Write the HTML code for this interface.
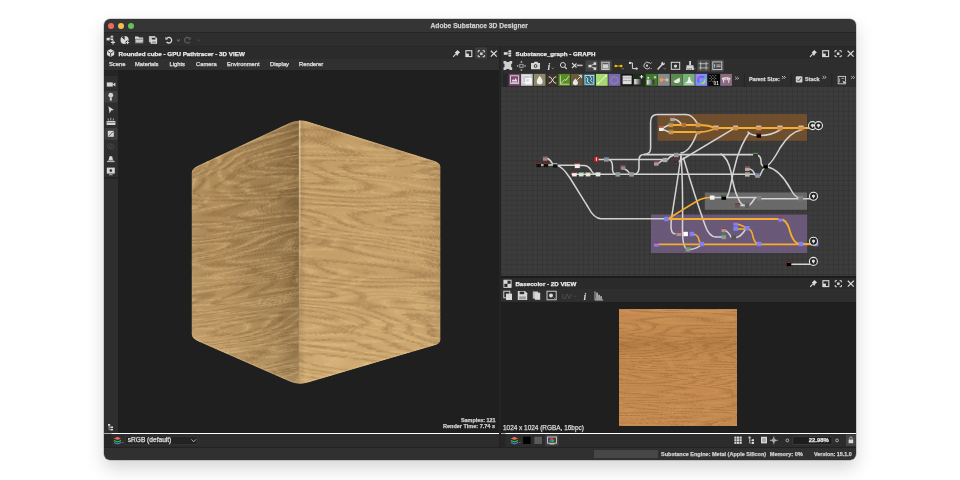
<!DOCTYPE html>
<html><head><meta charset="utf-8">
<style>
*{margin:0;padding:0;box-sizing:border-box}
html,body{width:960px;height:480px;overflow:hidden;background:#fff;font-family:"Liberation Sans",sans-serif;}
.a{position:absolute}
#win{position:absolute;left:104px;top:19px;width:752px;height:441px;border-radius:6px;overflow:hidden;box-shadow:0 8px 18px rgba(0,0,0,.17),0 0 0 .5px rgba(0,0,0,.3);will-change:transform}
#in{position:absolute;left:-104px;top:-19px;width:960px;height:480px}
.t{position:absolute;white-space:nowrap;color:#ececec;line-height:1;-webkit-text-stroke:0.25px currentColor}
.b{font-weight:bold}
.m{font-size:5.8px;top:62.3px;color:#e4e4e4}
</style></head><body>
<div id="win"><div id="in">
  <!-- title bar -->
  <div class="a" style="left:0;top:0;width:960px;height:33px;background:#353536"></div>
  <div class="a" style="left:0;top:32.4px;width:960px;height:1px;background:#262626"></div>
  <div class="a" style="left:108px;top:23px;width:6px;height:6px;border-radius:50%;background:#ed6a5e"></div>
  <div class="a" style="left:118px;top:23px;width:6px;height:6px;border-radius:50%;background:#f4bf4f"></div>
  <div class="a" style="left:128px;top:23px;width:6px;height:6px;border-radius:50%;background:#61c454"></div>
  <div class="t b" id="ttl" style="left:430.5px;top:22.5px;font-size:6.7px;color:#cfcfcf">Adobe Substance 3D Designer</div>
  <!-- toolbar -->
  <div class="a" style="left:0;top:33.4px;width:960px;height:13px;background:#2e2e2e"></div>
  <div class="a" style="left:0;top:46.2px;width:960px;height:1px;background:#272727"></div>
  <!-- left panel -->
  <div class="a" style="left:0;top:47px;width:499px;height:12px;background:#2b2b2b"></div>
  <div class="t b" id="h3d" style="left:118.4px;top:50.5px;font-size:6.25px">Rounded cube - GPU Pathtracer - 3D VIEW</div>
  <div class="a" style="left:0;top:59px;width:499px;height:11px;background:#303030"></div>
  <div class="t m" id="mn1" style="left:109px">Scene</div>
  <div class="t m" id="mn2" style="left:135px">Materials</div>
  <div class="t m" id="mn3" style="left:169.5px">Lights</div>
  <div class="t m" id="mn4" style="left:196px">Camera</div>
  <div class="t m" id="mn5" style="left:227px">Environment</div>
  <div class="t m" id="mn6" style="left:270px">Display</div>
  <div class="t m" id="mn7" style="left:299px">Renderer</div>
  <div class="a" style="left:0;top:70px;width:499px;height:363px;background:#1f1f1f"></div>
  <div class="a" style="left:0;top:70px;width:118px;height:363px;background:#2e2e2e"></div>
  <div class="a" style="left:0;top:70px;width:118px;height:6px;background:#252525"></div>
  <div class="a" style="left:0;top:433.5px;width:499px;height:13.5px;background:#2c2c2c"></div>
  <svg class="a" style="left:0;top:0" width="960" height="480" viewBox="0 0 960 480"><defs><clipPath id="cub"><path d="M191.80,172.48 Q191.80,168.48 198.80,165.20 L288.80,123.08 Q298.80,118.56 308.80,121.83 L433.30,160.42 Q440.30,162.59 440.30,166.59 L440.30,339.75 Q440.30,343.75 433.30,345.80 L308.80,382.28 Q298.80,385.50 288.80,381.37 L198.80,341.68 Q191.80,338.59 191.80,334.59 Z"/></clipPath><clipPath id="lf"><path d="M189.8,169.4136 L298.8,118.56479999999999 L298.8,385.49519999999995 L189.8,337.70980000000003 Z"/></clipPath><clipPath id="rf"><path d="M298.8,118.56479999999999 L442.3,163.213 L442.3,343.1661 L298.8,385.49519999999995 Z"/></clipPath><linearGradient id="gl" x1="0" y1="0" x2="0" y2="1"><stop offset="0" stop-color="#b28e5c"/><stop offset="0.45" stop-color="#b08c5b"/><stop offset="0.8" stop-color="#c09b66"/><stop offset="1" stop-color="#d2ae76"/></linearGradient><linearGradient id="gl3" x1="0" y1="0" x2="1" y2="0"><stop offset="0" stop-color="#fff4d8" stop-opacity="0.08"/><stop offset="0.3" stop-color="#000" stop-opacity="0"/><stop offset="0.8" stop-color="#2a1a08" stop-opacity="0.16"/><stop offset="1" stop-color="#2a1a08" stop-opacity="0.34"/></linearGradient><linearGradient id="gr" x1="0" y1="0" x2="0" y2="1"><stop offset="0" stop-color="#c29d67"/><stop offset="0.6" stop-color="#c6a06a"/><stop offset="1" stop-color="#d2ad74"/></linearGradient><linearGradient id="gr3" x1="0" y1="0" x2="1" y2="0"><stop offset="0" stop-color="#2a1a08" stop-opacity="0.18"/><stop offset="0.05" stop-color="#2a1a08" stop-opacity="0"/><stop offset="0.85" stop-color="#000" stop-opacity="0"/><stop offset="1" stop-color="#2a1a08" stop-opacity="0.08"/></linearGradient><linearGradient id="hl" x1="0" y1="0" x2="0" y2="1"><stop offset="0" stop-color="#fff2cc" stop-opacity="0.6"/><stop offset="0.4" stop-color="#fff2cc" stop-opacity="0.28"/><stop offset="0.75" stop-color="#fff2cc" stop-opacity="0.02"/><stop offset="1" stop-color="#fff2cc" stop-opacity="0"/></linearGradient><linearGradient id="bev" x1="0" y1="0" x2="1" y2="0"><stop offset="0" stop-color="#e8c890" stop-opacity="0"/><stop offset="0.5" stop-color="#e8c890" stop-opacity="0.22"/><stop offset="1" stop-color="#e8c890" stop-opacity="0"/></linearGradient><linearGradient id="bevm" x1="0" y1="0" x2="0" y2="1"><stop offset="0" stop-color="#fff" stop-opacity="0"/><stop offset="0.55" stop-color="#fff" stop-opacity="0"/><stop offset="1" stop-color="#fff" stop-opacity="1"/></linearGradient><mask id="bm"><rect x="280" y="110" width="40" height="280" fill="url(#bevm)"/></mask><filter id="wood" x="0" y="0" width="100%" height="100%" color-interpolation-filters="sRGB"><feTurbulence type="fractalNoise" baseFrequency="0.0022 0.016" numOctaves="3" seed="11" result="n"/><feComponentTransfer in="n" result="b"><feFuncR type="table" tableValues="0 0 0.1 0.7 0.25 0 0 0 0.1 0.7 0.25 0 0 0 0.1 0.7 0.25 0 0 0 0.1 0.7 0.25 0 0 0 0.1 0.7 0.25 0 0 0 0.1 0.7 0.25 0 0 0 0.1 0.7 0.25 0 0 0 0.1 0.7 0.25 0 0 0 0.1 0.7 0.25 0 0 0 0.1 0.7 0.25 0 0 0 0.1 0.7 0.25 0 0 0 0.1 0.7 0.25 0 0 0 0.1 0.7 0.25 0 0 0 0.1 0.7 0.25 0 0 0 0.1 0.7 0.25 0 0 0 0.1 0.7 0.25 0 0 0 0.1 0.7 0.25 0 0 0 0.1 0.7 0.25 0 0 0 0.1 0.7 0.25 0 0 0 0.1 0.7 0.25 0 0 0 0.1 0.7 0.25 0 0 0 0.1 0.7 0.25 0 0"/></feComponentTransfer><feColorMatrix in="b" type="matrix" values="0 0 0 0 0.36  0 0 0 0 0.23  0 0 0 0 0.1  0.4 0 0 0 0"/><feGaussianBlur stdDeviation="0.25"/></filter><filter id="wood2" x="0" y="0" width="100%" height="100%" color-interpolation-filters="sRGB"><feTurbulence type="fractalNoise" baseFrequency="0.0022 0.015" numOctaves="3" seed="23" result="n"/><feComponentTransfer in="n" result="b"><feFuncR type="table" tableValues="0 0 0.1 0.7 0.25 0 0 0 0.1 0.7 0.25 0 0 0 0.1 0.7 0.25 0 0 0 0.1 0.7 0.25 0 0 0 0.1 0.7 0.25 0 0 0 0.1 0.7 0.25 0 0 0 0.1 0.7 0.25 0 0 0 0.1 0.7 0.25 0 0 0 0.1 0.7 0.25 0 0 0 0.1 0.7 0.25 0 0 0 0.1 0.7 0.25 0 0 0 0.1 0.7 0.25 0 0 0 0.1 0.7 0.25 0 0 0 0.1 0.7 0.25 0 0 0 0.1 0.7 0.25 0 0 0 0.1 0.7 0.25 0 0 0 0.1 0.7 0.25 0 0 0 0.1 0.7 0.25 0 0 0 0.1 0.7 0.25 0 0 0 0.1 0.7 0.25 0 0 0 0.1 0.7 0.25 0 0 0 0.1 0.7 0.25 0 0"/></feComponentTransfer><feColorMatrix in="b" type="matrix" values="0 0 0 0 0.36  0 0 0 0 0.23  0 0 0 0 0.1  0.38 0 0 0 0"/><feGaussianBlur stdDeviation="0.25"/></filter><filter id="woodl" x="0" y="0" width="100%" height="100%" color-interpolation-filters="sRGB"><feTurbulence type="fractalNoise" baseFrequency="0.0025 0.017" numOctaves="3" seed="5" result="n"/><feComponentTransfer in="n" result="b"><feFuncR type="table" tableValues="0 0 0.1 0.7 0.25 0 0 0 0.1 0.7 0.25 0 0 0 0.1 0.7 0.25 0 0 0 0.1 0.7 0.25 0 0 0 0.1 0.7 0.25 0 0 0 0.1 0.7 0.25 0 0 0 0.1 0.7 0.25 0 0 0 0.1 0.7 0.25 0 0 0 0.1 0.7 0.25 0 0 0 0.1 0.7 0.25 0 0 0 0.1 0.7 0.25 0 0 0 0.1 0.7 0.25 0 0 0 0.1 0.7 0.25 0 0 0 0.1 0.7 0.25 0 0 0 0.1 0.7 0.25 0 0 0 0.1 0.7 0.25 0 0 0 0.1 0.7 0.25 0 0 0 0.1 0.7 0.25 0 0 0 0.1 0.7 0.25 0 0 0 0.1 0.7 0.25 0 0 0 0.1 0.7 0.25 0 0 0 0.1 0.7 0.25 0 0"/></feComponentTransfer><feColorMatrix in="b" type="matrix" values="0 0 0 0 0.95  0 0 0 0 0.83  0 0 0 0 0.6  0.5 0 0 0 0"/><feGaussianBlur stdDeviation="0.25"/></filter><filter id="woodl2" x="0" y="0" width="100%" height="100%" color-interpolation-filters="sRGB"><feTurbulence type="fractalNoise" baseFrequency="0.0025 0.017" numOctaves="3" seed="9" result="n"/><feComponentTransfer in="n" result="b"><feFuncR type="table" tableValues="0 0 0.1 0.7 0.25 0 0 0 0.1 0.7 0.25 0 0 0 0.1 0.7 0.25 0 0 0 0.1 0.7 0.25 0 0 0 0.1 0.7 0.25 0 0 0 0.1 0.7 0.25 0 0 0 0.1 0.7 0.25 0 0 0 0.1 0.7 0.25 0 0 0 0.1 0.7 0.25 0 0 0 0.1 0.7 0.25 0 0 0 0.1 0.7 0.25 0 0 0 0.1 0.7 0.25 0 0 0 0.1 0.7 0.25 0 0 0 0.1 0.7 0.25 0 0 0 0.1 0.7 0.25 0 0 0 0.1 0.7 0.25 0 0 0 0.1 0.7 0.25 0 0 0 0.1 0.7 0.25 0 0 0 0.1 0.7 0.25 0 0 0 0.1 0.7 0.25 0 0 0 0.1 0.7 0.25 0 0 0 0.1 0.7 0.25 0 0"/></feComponentTransfer><feColorMatrix in="b" type="matrix" values="0 0 0 0 0.95  0 0 0 0 0.83  0 0 0 0 0.6  0.48 0 0 0 0"/><feGaussianBlur stdDeviation="0.25"/></filter></defs><g clip-path="url(#cub)"><g clip-path="url(#lf)"><rect x="185" y="110" width="115" height="280" fill="url(#gl)"/><rect x="185" y="110" width="115" height="280" fill="url(#gl3)"/><g transform="translate(191.8 168.4) matrix(1 -0.15 0 1 0 0)"><rect x="-10" y="-60" width="130" height="300" filter="url(#woodl)"/><rect x="-10" y="-60" width="130" height="300" filter="url(#wood)"/></g></g><g clip-path="url(#rf)"><rect x="298" y="110" width="145" height="280" fill="url(#gr)"/><rect x="298.8" y="110" width="142" height="280" fill="url(#gr3)"/><g transform="translate(298.8 118.5) matrix(1 0.1 0 1 0 0)"><rect x="-5" y="-60" width="150" height="340" filter="url(#woodl2)"/><rect x="-5" y="-60" width="150" height="340" filter="url(#wood2)"/></g></g><rect x="286" y="110" width="26" height="280" fill="url(#bev)" mask="url(#bm)"/><rect x="298.9" y="118" width="1.6" height="270" fill="url(#hl)"/><path d="M194.80,168.07 L290.80,123.15 Q298.80,119.76 306.80,122.21 L437.30,162.66" fill="none" stroke="#f0d8a8" stroke-opacity="0.25" stroke-width="1.6"/><path d="M194.80,338.91 L289.80,380.81 Q298.80,384.30 307.80,381.57 L437.30,343.63" fill="none" stroke="#f0d8a8" stroke-opacity="0.2" stroke-width="1.6"/></g></svg>
  <div class="t b" id="smp" style="left:461px;top:417.5px;font-size:5.4px;color:#d0d0d0">Samples: 121</div>
  <div class="t b" id="rnd" style="left:443px;top:423.9px;font-size:5.53px;color:#d0d0d0">Render Time: 7.74 s</div>
  <!-- splitter -->
  <div class="a" style="left:499px;top:47px;width:2px;height:400px;background:#242424"></div>
  <!-- right panel -->
  <div class="a" style="left:501px;top:47px;width:459px;height:12px;background:#2a2a2a"></div>
  <div class="t b" id="hgr" style="left:515.6px;top:50.5px;font-size:6.2px">Substance_graph - GRAPH</div>
  <div class="a" style="left:501px;top:59px;width:459px;height:14px;background:#2e2e2e"></div>
  <div class="a" style="left:501px;top:73px;width:459px;height:14px;background:#2e2e2e"></div>
  <div class="a" id="canvas" style="left:501px;top:87px;width:355px;height:189px;background:#3b3b3b"></div>
  <svg class="a" style="left:0;top:0" width="960" height="480" viewBox="0 0 960 480"><defs><pattern id="grid" x="501.3" y="90.9" width="5.1" height="4.95" patternUnits="userSpaceOnUse"><rect width="5.1" height="4.95" fill="#3c3c3c"/><rect width="5.1" height="0.8" fill="#343434"/><rect width="0.8" height="4.95" fill="#343434"/></pattern><clipPath id="cc"><rect x="501" y="87" width="355" height="189"/></clipPath></defs><g clip-path="url(#cc)"><rect x="501" y="87" width="355" height="189" fill="url(#grid)" /><rect x="657.5" y="114" width="149.5" height="26.8" fill="#75512d"  opacity="0.9"/><rect x="704.8" y="192.5" width="102.2" height="17.3" fill="#6f6f6f"  opacity="0.9"/><rect x="651" y="214.5" width="156.2" height="38.5" fill="#6f5c80"  opacity="0.9"/><path d="M572,174.3 H598" fill="none" stroke="#d2d2d2" stroke-width="1.55" stroke-linecap="round"/><path d="M540.8,165 H543.8 M548,165 H553 M547.5,158.5 Q551,160 553,165" fill="none" stroke="#d2d2d2" stroke-width="1.55" stroke-linecap="round"/><path d="M557.5,165.3 H575 M579.6,165.5 H584 Q588,165.5 591,170 Q593,174.3 597,174.3 H757" fill="none" stroke="#d2d2d2" stroke-width="1.55" stroke-linecap="round"/><path d="M557,165.5 Q562,166 570,178 L588,207 Q594,218.7 601,218.7 H664" fill="none" stroke="#d2d2d2" stroke-width="1.55" stroke-linecap="round"/><path d="M598.5,159.4 H604 M608.5,159.4 H661 Q663,159.5 665,160 M667,160 Q670,156 674,155" fill="none" stroke="#d2d2d2" stroke-width="1.55" stroke-linecap="round"/><path d="M608.5,159.6 Q612,160 612.5,166 V170 Q613,174.4 617,174.4" fill="none" stroke="#d2d2d2" stroke-width="1.55" stroke-linecap="round"/><path d="M623,169 Q627,169 630,174" fill="none" stroke="#d2d2d2" stroke-width="1.55" stroke-linecap="round"/><path d="M658.6,163.2 Q661,161 663,160.2" fill="none" stroke="#d2d2d2" stroke-width="1.55" stroke-linecap="round"/><path d="M686,114.5 H657.5 Q650.6,114.5 650.6,122 V148 Q650.6,154.5 644,154.5 Q639,154.5 639,160 V168 Q639,174.4 633,174.4" fill="none" stroke="#d2d2d2" stroke-width="1.55" stroke-linecap="round"/><path d="M644,154.6 H753" fill="none" stroke="#d2d2d2" stroke-width="1.55" stroke-linecap="round"/><path d="M686,114.5 Q692,114.5 697,123" fill="none" stroke="#d2d2d2" stroke-width="1.55" stroke-linecap="round"/><path d="M672.5,119 Q678,119 682,125" fill="none" stroke="#d2d2d2" stroke-width="1.55" stroke-linecap="round"/><path d="M681,153 Q690,152 697,133" fill="none" stroke="#d2d2d2" stroke-width="1.55" stroke-linecap="round"/><path d="M676.3,163 L732.5,129.4" fill="none" stroke="#d2d2d2" stroke-width="1.55" stroke-linecap="round"/><path d="M681,156 Q676,190 672,215 Q669,233.8 675,233.8" fill="none" stroke="#d2d2d2" stroke-width="1.55" stroke-linecap="round"/><path d="M681,156 Q683,180 682.5,230 Q682.5,249 688,249.4 M690,249.4 Q697,249 702,244" fill="none" stroke="#d2d2d2" stroke-width="1.55" stroke-linecap="round"/><path d="M683.5,158 Q696,200 705,225 Q709,237 716,237 H723" fill="none" stroke="#d2d2d2" stroke-width="1.55" stroke-linecap="round"/><path d="M721,154 Q728,158 731,172 Q734,190 738,198 Q741,205.5 745,205.6" fill="none" stroke="#d2d2d2" stroke-width="1.55" stroke-linecap="round"/><path d="M749,133 Q742,143 737,158 Q733,172 730,188 Q728,197 726,197.5" fill="none" stroke="#d2d2d2" stroke-width="1.55" stroke-linecap="round"/><path d="M741,205.5 H745 M749,205.6 Q752,203 755,198 M726,197.5 H757 M761,198.8 H813" fill="none" stroke="#d2d2d2" stroke-width="1.55" stroke-linecap="round"/><path d="M748,132 Q752,136 759,135.5 Q770,136 780,130" fill="none" stroke="#d2d2d2" stroke-width="1.55" stroke-linecap="round"/><path d="M801,130 Q790,132 780,148 Q772,163 767,166" fill="none" stroke="#d2d2d2" stroke-width="1.55" stroke-linecap="round"/><path d="M767,166.5 Q780,170 790,188 Q795,198 800,198" fill="none" stroke="#d2d2d2" stroke-width="1.55" stroke-linecap="round"/><path d="M757,155 Q761,156 761,161 Q761,166 764,166 M760,175.5 Q762,170 765,167 M749,169 Q753,169 755,175" fill="none" stroke="#d2d2d2" stroke-width="1.55" stroke-linecap="round"/><path d="M714,197.5 H721" fill="none" stroke="#d2d2d2" stroke-width="1.55" stroke-linecap="round"/><path d="M723.8,230 Q728,231 731,237 M736,237.5 Q741,237 746,228.5" fill="none" stroke="#d2d2d2" stroke-width="1.55" stroke-linecap="round"/><path d="M791.3,264.2 H810" fill="none" stroke="#d2d2d2" stroke-width="1.55" stroke-linecap="round"/><path d="M661.3,128.8 L669,125 M661.3,128.8 L669,132" fill="none" stroke="#d2d2d2" stroke-width="1.55" stroke-linecap="round"/><path d="M673,125 H698 M673,132 H698 M700,125 Q708,125 716,128 M700,132 Q708,132 716,128 M716,128 H812" fill="none" stroke="#f7ad2c" stroke-width="1.9" stroke-linecap="round"/><path d="M668,219 H780 Q786,219.4 789,228 Q793,244 800,244 H811" fill="none" stroke="#f7ad2c" stroke-width="1.8" stroke-linecap="round"/><path d="M668,219 Q690,205 700,199.5 Q705,197.5 710,197.5" fill="none" stroke="#f7ad2c" stroke-width="1.6" stroke-linecap="round"/><path d="M656.3,244.4 H812" fill="none" stroke="#f7ad2c" stroke-width="1.8" stroke-linecap="round"/><path d="M692,234 Q698,234 699,240 Q700,244 702,244" fill="none" stroke="#f7ad2c" stroke-width="1.6" stroke-linecap="round"/><path d="M737,224 Q744,226 747,228.5 M737,229 H747 M747,228.5 Q752,229 753,237 Q755,244 759,244" fill="none" stroke="#f7ad2c" stroke-width="1.6" stroke-linecap="round"/><rect x="536.4" y="162.8" width="4.6" height="4.4" fill="#111" /><rect x="536.4" y="162.8" width="4.6" height="1.1" fill="#b02020" /><rect x="543.6" y="162.8" width="4.6" height="4.4" fill="#111" /><rect x="543.6" y="162.8" width="4.6" height="1.1" fill="#b02020" /><rect x="542.9" y="156.3" width="4.6" height="4.4" fill="#8c8c8c" /><rect x="542.9" y="156.3" width="4.6" height="1.1" fill="#b02020" /><rect x="552.9" y="163.2" width="4.6" height="4.4" fill="#111" /><rect x="552.9" y="163.2" width="4.6" height="1.1" fill="#ccc" /><rect x="574.8" y="163.1" width="5" height="5" fill="#f0f0f0" /><rect x="574.8" y="163.1" width="5" height="1.1" fill="#b02020" /><rect x="572.1" y="172.0" width="4.6" height="4.4" fill="#eee" /><rect x="572.1" y="172.0" width="4.6" height="1.1" fill="#b02020" /><rect x="578.9" y="172.0" width="4.6" height="4.4" fill="#ddd" /><rect x="578.9" y="172.0" width="4.6" height="1.1" fill="#5a9a50" /><rect x="585.7" y="172.0" width="4.6" height="4.4" fill="#e8e8e8" /><rect x="585.7" y="172.0" width="4.6" height="1.1" fill="#8a8a50" /><rect x="595.7" y="172.0" width="4.6" height="4.4" fill="#e8e8e8" /><rect x="595.7" y="172.0" width="4.6" height="1.1" fill="#aaa" /><rect x="594.0" y="156.9" width="4.6" height="5" fill="#c42020" /><rect x="595.9" y="157.4" width="0.9" height="3.4" fill="#fff" /><rect x="604.0" y="157.2" width="4.6" height="4.4" fill="#999" /><rect x="604.0" y="157.2" width="4.6" height="1.1" fill="#5070c0" /><rect x="615.5" y="172.2" width="4.6" height="4.4" fill="#999" /><rect x="620.7" y="165.3" width="4.6" height="4.4" fill="#8c8c8c" /><rect x="620.7" y="165.3" width="4.6" height="1.1" fill="#b02020" /><rect x="629.2" y="172.2" width="4.6" height="4.4" fill="#999" /><rect x="654.0" y="161.3" width="4.6" height="4.4" fill="#a0a0a0" /><rect x="654.0" y="161.3" width="4.6" height="1.1" fill="#b02020" /><rect x="662.7" y="157.8" width="4.6" height="4.4" fill="#aaa" /><rect x="674.0" y="152.8" width="4.6" height="4.4" fill="#999" /><rect x="674.0" y="159.3" width="4.6" height="4.4" fill="#333" /><rect x="674.0" y="159.3" width="4.6" height="1.1" fill="#b02020" /><rect x="670.2" y="116.8" width="4.6" height="4.4" fill="#a8a8a8" /><rect x="670.2" y="116.8" width="4.6" height="1.1" fill="#b02020" /><rect x="659.0" y="126.6" width="4.6" height="4.4" fill="#eee" /><rect x="659.0" y="126.6" width="4.6" height="1.1" fill="#b02020" /><rect x="668.7" y="122.8" width="4.6" height="4.4" fill="#d0924a" /><rect x="668.7" y="122.8" width="4.6" height="1.1" fill="#5a9a50" /><rect x="668.7" y="129.8" width="4.6" height="4.4" fill="#d0924a" /><rect x="668.7" y="129.8" width="4.6" height="1.1" fill="#5a9a50" /><rect x="681.5" y="122.8" width="4.6" height="4.4" fill="#b07038" /><rect x="695.7" y="122.8" width="4.6" height="4.4" fill="#d0924a" /><rect x="695.7" y="129.8" width="4.6" height="4.4" fill="#d0924a" /><rect x="695.7" y="129.8" width="4.6" height="1.1" fill="#333" /><rect x="713.5" y="125.7" width="5" height="4.6" fill="#d0924a" /><rect x="713.5" y="125.7" width="5" height="1.1" fill="#ccc" /><rect x="733.1" y="125.7" width="5" height="4.6" fill="#d0924a" /><rect x="733.1" y="125.7" width="5" height="1.1" fill="#ccc" /><rect x="756.3" y="125.7" width="5" height="4.6" fill="#d0924a" /><rect x="756.3" y="125.7" width="5" height="1.1" fill="#ccc" /><rect x="777.5" y="125.7" width="5" height="4.6" fill="#d0924a" /><rect x="777.5" y="125.7" width="5" height="1.1" fill="#ccc" /><rect x="798.5" y="125.7" width="5" height="4.6" fill="#d0924a" /><rect x="798.5" y="125.7" width="5" height="1.1" fill="#ccc" /><rect x="756.5" y="133.3" width="4.6" height="4.4" fill="#000" /><rect x="756.5" y="133.3" width="4.6" height="1.1" fill="#b02020" /><rect x="753.3" y="152.8" width="4.6" height="4.4" fill="#333" /><rect x="753.3" y="152.8" width="4.6" height="1.1" fill="#5a9a50" /><rect x="745.0" y="166.6" width="4.6" height="4.4" fill="#aaa" /><rect x="745.0" y="166.6" width="4.6" height="1.1" fill="#b02020" /><rect x="745.0" y="172.2" width="4.6" height="4.4" fill="#bbb" /><rect x="745.0" y="172.2" width="4.6" height="1.1" fill="#8a8a50" /><rect x="755.2" y="173.4" width="4.6" height="4.4" fill="#999" /><rect x="755.2" y="173.4" width="4.6" height="1.1" fill="#5070c0" /><rect x="763.3" y="164.1" width="4.6" height="4.4" fill="#000" /><rect x="763.3" y="164.1" width="4.6" height="1.1" fill="#444" /><rect x="709.9" y="195.5" width="4.6" height="4.2" fill="#f2f2f2" /><rect x="721.5" y="195.4" width="4.6" height="4.4" fill="#000" /><rect x="721.5" y="195.4" width="4.6" height="1.1" fill="#5a9a50" /><rect x="756.7" y="196.3" width="4.6" height="4.4" fill="#7a7a7a" /><rect x="756.7" y="196.3" width="4.6" height="1.1" fill="#888" /><rect x="798.5" y="196.3" width="4.6" height="4.4" fill="#7a7a7a" /><rect x="798.5" y="196.3" width="4.6" height="1.1" fill="#888" /><rect x="735.0" y="203.3" width="4.6" height="4.4" fill="#5a5a5a" /><rect x="735.0" y="203.3" width="4.6" height="1.1" fill="#b02020" /><rect x="744.9" y="203.4" width="4.6" height="4.4" fill="#5a5a5a" /><rect x="664.2" y="216.8" width="4.6" height="4.4" fill="#8080f0" /><rect x="654.0" y="242.2" width="4.6" height="4.4" fill="#8080f0" /><rect x="654.0" y="242.2" width="4.6" height="1.1" fill="#b02020" /><rect x="676.5" y="231.6" width="4.6" height="4.4" fill="#999" /><rect x="676.5" y="231.6" width="4.6" height="1.1" fill="#b02020" /><rect x="683.3" y="231.8" width="4.6" height="4.4" fill="#fff" /><rect x="689.6" y="231.8" width="4.6" height="4.4" fill="#8080f0" /><rect x="699.6" y="241.8" width="4.6" height="4.4" fill="#8080f0" /><rect x="685.7" y="247.2" width="4.6" height="4.4" fill="#8a9a8a" /><rect x="685.7" y="247.2" width="4.6" height="1.1" fill="#5a9a50" /><rect x="721.5" y="227.8" width="4.6" height="4.4" fill="#999" /><rect x="721.5" y="227.8" width="4.6" height="1.1" fill="#b02020" /><rect x="721.5" y="234.8" width="4.6" height="4.4" fill="#8a9a8a" /><rect x="721.5" y="234.8" width="4.6" height="1.1" fill="#5a9a50" /><rect x="731.5" y="235.3" width="4.6" height="4.4" fill="#555" /><rect x="733.4" y="221.3" width="4.6" height="4.4" fill="#8080f0" /><rect x="733.4" y="221.3" width="4.6" height="1.1" fill="#b02020" /><rect x="733.4" y="226.4" width="4.6" height="4.4" fill="#8080f0" /><rect x="744.9" y="226.0" width="4.6" height="4.4" fill="#8080f0" /><rect x="756.7" y="241.8" width="4.6" height="4.4" fill="#8080f0" /><rect x="778.3" y="217.2" width="4.6" height="4.4" fill="#8080f0" /><rect x="778.3" y="217.2" width="4.6" height="1.1" fill="#b02020" /><rect x="798.7" y="241.8" width="4.6" height="4.4" fill="#8080f0" /><rect x="786.7" y="261.8" width="4.6" height="4.4" fill="#000" /><rect x="786.7" y="261.8" width="4.6" height="1.1" fill="#b02020" /><circle cx="812.5" cy="125.6" r="4" fill="#222" stroke="#e8e8e8" stroke-width="1.1"/><circle cx="812.5" cy="125.3" r="1.6" fill="#ddd"/><rect x="812.0" y="125.6" width="1" height="2" fill="#ddd"/><circle cx="818.5" cy="125.6" r="4" fill="#222" stroke="#e8e8e8" stroke-width="1.1"/><circle cx="818.5" cy="125.3" r="1.6" fill="#ddd"/><rect x="818.0" y="125.6" width="1" height="2" fill="#ddd"/><circle cx="813.5" cy="196.3" r="4" fill="#222" stroke="#e8e8e8" stroke-width="1.1"/><circle cx="813.5" cy="196.0" r="1.6" fill="#ddd"/><rect x="813.0" y="196.3" width="1" height="2" fill="#ddd"/><rect x="813.7" y="241.8" width="4.6" height="4.4" fill="#8080f0" /><circle cx="813.5" cy="241.3" r="4" fill="#222" stroke="#e8e8e8" stroke-width="1.1"/><circle cx="813.5" cy="241.0" r="1.6" fill="#ddd"/><rect x="813.0" y="241.3" width="1" height="2" fill="#ddd"/><circle cx="813.4" cy="261.4" r="4" fill="#222" stroke="#e8e8e8" stroke-width="1.1"/><circle cx="813.4" cy="261.09999999999997" r="1.6" fill="#ddd"/><rect x="812.9" y="261.4" width="1" height="2" fill="#ddd"/></g></svg>
  <div class="a" style="left:501px;top:276px;width:459px;height:2px;background:#1c1c1c"></div>
  <div class="a" style="left:501px;top:278px;width:459px;height:11px;background:#2a2a2a"></div>
  <div class="t b" id="h2d" style="left:515.4px;top:280.5px;font-size:6.2px">Basecolor - 2D VIEW</div>
  <div class="a" style="left:501px;top:289px;width:459px;height:13px;background:#2e2e2e"></div>
  <div class="a" style="left:501px;top:302px;width:459px;height:131px;background:#1f1f1f"></div>
  <svg class="a" style="left:619px;top:309px" width="118" height="117" viewBox="0 0 118 117"><defs><filter id="tw1" x="0" y="0" width="100%" height="100%" color-interpolation-filters="sRGB"><feTurbulence type="fractalNoise" baseFrequency="0.0025 0.03" numOctaves="3" seed="31" result="n"/><feComponentTransfer in="n" result="b"><feFuncR type="table" tableValues="0 0 0.1 0.7 0.25 0 0 0 0.1 0.7 0.25 0 0 0 0.1 0.7 0.25 0 0 0 0.1 0.7 0.25 0 0 0 0.1 0.7 0.25 0 0 0 0.1 0.7 0.25 0 0 0 0.1 0.7 0.25 0 0 0 0.1 0.7 0.25 0 0 0 0.1 0.7 0.25 0 0 0 0.1 0.7 0.25 0 0 0 0.1 0.7 0.25 0 0 0 0.1 0.7 0.25 0 0 0 0.1 0.7 0.25 0 0 0 0.1 0.7 0.25 0 0 0 0.1 0.7 0.25 0 0 0 0.1 0.7 0.25 0 0 0 0.1 0.7 0.25 0 0 0 0.1 0.7 0.25 0 0 0 0.1 0.7 0.25 0 0 0 0.1 0.7 0.25 0 0 0 0.1 0.7 0.25 0 0 0 0.1 0.7 0.25 0 0"/></feComponentTransfer><feColorMatrix in="b" type="matrix" values="0 0 0 0 0.5  0 0 0 0 0.3  0 0 0 0 0.12  0.4 0 0 0 0"/><feGaussianBlur stdDeviation="0.2"/></filter><filter id="tw2" x="0" y="0" width="100%" height="100%" color-interpolation-filters="sRGB"><feTurbulence type="fractalNoise" baseFrequency="0.0025 0.03" numOctaves="3" seed="17" result="n"/><feComponentTransfer in="n" result="b"><feFuncR type="table" tableValues="0 0 0.1 0.7 0.25 0 0 0 0.1 0.7 0.25 0 0 0 0.1 0.7 0.25 0 0 0 0.1 0.7 0.25 0 0 0 0.1 0.7 0.25 0 0 0 0.1 0.7 0.25 0 0 0 0.1 0.7 0.25 0 0 0 0.1 0.7 0.25 0 0 0 0.1 0.7 0.25 0 0 0 0.1 0.7 0.25 0 0 0 0.1 0.7 0.25 0 0 0 0.1 0.7 0.25 0 0 0 0.1 0.7 0.25 0 0 0 0.1 0.7 0.25 0 0 0 0.1 0.7 0.25 0 0 0 0.1 0.7 0.25 0 0 0 0.1 0.7 0.25 0 0 0 0.1 0.7 0.25 0 0 0 0.1 0.7 0.25 0 0 0 0.1 0.7 0.25 0 0 0 0.1 0.7 0.25 0 0 0 0.1 0.7 0.25 0 0"/></feComponentTransfer><feColorMatrix in="b" type="matrix" values="0 0 0 0 0.92  0 0 0 0 0.7  0 0 0 0 0.45  0.3 0 0 0 0"/><feGaussianBlur stdDeviation="0.2"/></filter><linearGradient id="tg" x1="0" y1="0" x2="0" y2="1"><stop offset="0" stop-color="#c68c52"/><stop offset="0.2" stop-color="#c2884e"/><stop offset="0.3" stop-color="#b47c46"/><stop offset="0.42" stop-color="#c2884e"/><stop offset="1" stop-color="#c48a50"/></linearGradient></defs><rect width="118" height="117" fill="url(#tg)"/><rect width="118" height="117" filter="url(#tw2)"/><rect width="118" height="117" filter="url(#tw1)"/></svg>
  <div class="t" id="res" style="left:503px;top:424.6px;font-size:6.45px;color:#d8d8d8">1024 x 1024 (RGBA, 16bpc)</div>
  <div class="a" style="left:501px;top:433.5px;width:459px;height:13.5px;background:#2c2c2c"></div>
  <svg class="a" style="left:0;top:0" width="960" height="480" viewBox="0 0 960 480"><rect x="106.60" y="37.80" width="3.00" height="2.60" fill="#d9d9d9" /><rect x="110.80" y="35.70" width="2.40" height="1.80" fill="#d9d9d9" /><rect x="110.80" y="38.40" width="2.40" height="1.80" fill="#d9d9d9" /><path d="M109.5,39 L110.8,36.6 M109.5,39 L110.8,39.3" fill="none" stroke="#d9d9d9" stroke-width="0.6" /><path d="M110.9,42.4 H115.1 M113,40.3 V44.5" fill="none" stroke="#d9d9d9" stroke-width="1.1" /><circle cx="124.6" cy="40" r="4.1" fill="#d9d9d9" stroke="none" stroke-width="1"/><path d="M124.6,40 L121.8,37.2 A4.1,4.1 0 0 1 124.6,35.9 Z" fill="#2b2b2b" stroke="none" stroke-width="1" /><circle cx="127.6" cy="42.6" r="2.1" fill="#2b2b2b" stroke="none" stroke-width="1"/><path d="M126,42.6 H129.2 M127.6,41 V44.2" fill="none" stroke="#d9d9d9" stroke-width="1" /><path d="M135,36.4 H138.2 L139.2,37.4 H143.2 V43.2 H135 Z" fill="#d9d9d9" stroke="none" stroke-width="1" /><path d="M135.3,39.2 H143.8 L142.8,43 H135.3 Z" fill="#c8c8c8" stroke="#2b2b2b" stroke-width="0.5" /><rect x="148.90" y="36.00" width="6.40" height="6.20" fill="#bdbdbd" /><rect x="150.60" y="37.60" width="6.50" height="6.20" fill="#d9d9d9" /><rect x="151.80" y="37.90" width="3.60" height="1.60" fill="#2b2b2b" /><rect x="152.00" y="41.30" width="4.00" height="1.80" fill="#9a9a9a" /><path d="M166.9,38.2 A2.8,2.8 0 1 1 166.6,41.9" fill="none" stroke="#d9d9d9" stroke-width="1.3" /><path d="M165.3,37 L165.5,39.8 L168.3,39.2 Z" fill="#d9d9d9" stroke="none" stroke-width="1" /><path d="M176.9,39.6 L178.4,41 L179.9,39.6" fill="none" stroke="#bbb" stroke-width="0.7" /><path d="M189.3,38.2 A2.8,2.8 0 1 0 189.6,41.9" fill="none" stroke="#5e5e5e" stroke-width="1.2" /><path d="M190.9,37 L190.7,39.8 L187.9,39.2 Z" fill="#5e5e5e" stroke="none" stroke-width="1" /><path d="M197.2,39.6 L198.7,41 L200.2,39.6" fill="none" stroke="#5a5a5a" stroke-width="0.7" /><g transform="translate(0 0)"><path d="M453.2,56.8 L455.7,54.2" fill="none" stroke="#d9d9d9" stroke-width="1.1" /><path d="M454.9,52.6 L457.5,50 L460.09999999999997,52.6 L458.9,53.2 L457.09999999999997,56 Z" fill="#d9d9d9" stroke="none" stroke-width="1" /><rect x="465.90" y="50.70" width="5.90" height="5.90" fill="none" stroke="#d9d9d9" stroke-width="1.1"/><rect x="465.90" y="53.60" width="3.00" height="3.00" fill="#d9d9d9" /><rect x="475.10" y="47.20" width="11.90" height="11.60" fill="#3d3d3d" rx="1" /><path d="M478.2,52.4 V50.7 H480.0 M482.59999999999997,50.7 H484.4 V52.4 M484.4,55 V56.7 H482.59999999999997 M480.0,56.7 H478.2 V55" fill="none" stroke="#d9d9d9" stroke-width="1" /><rect x="480.10" y="52.50" width="2.50" height="2.40" fill="#d9d9d9" /><path d="M490.79999999999995,50.8 L496.79999999999995,56.6 M496.79999999999995,50.8 L490.79999999999995,56.6" fill="none" stroke="#d9d9d9" stroke-width="1.2" /></g><g transform="translate(0 0)"><path d="M810.0,56.8 L812.5,54.2" fill="none" stroke="#d9d9d9" stroke-width="1.1" /><path d="M811.7,52.6 L814.3000000000001,50 L816.9000000000001,52.6 L815.7,53.2 L813.9000000000001,56 Z" fill="#d9d9d9" stroke="none" stroke-width="1" /><rect x="822.70" y="50.70" width="5.90" height="5.90" fill="none" stroke="#d9d9d9" stroke-width="1.1"/><rect x="822.70" y="53.60" width="3.00" height="3.00" fill="#d9d9d9" /><path d="M835.0,52.4 V50.7 H836.8 M839.4,50.7 H841.2 V52.4 M841.2,55 V56.7 H839.4 M836.8,56.7 H835.0 V55" fill="none" stroke="#d9d9d9" stroke-width="1" /><rect x="836.90" y="52.50" width="2.50" height="2.40" fill="#d9d9d9" /><path d="M847.6,50.8 L853.6,56.6 M853.6,50.8 L847.6,56.6" fill="none" stroke="#d9d9d9" stroke-width="1.2" /></g><g transform="translate(0 230)"><path d="M810.1999999999999,56.8 L812.6999999999999,54.2" fill="none" stroke="#d9d9d9" stroke-width="1.1" /><path d="M811.9,52.6 L814.5,50 L817.1,52.6 L815.9,53.2 L814.1,56 Z" fill="#d9d9d9" stroke="none" stroke-width="1" /><rect x="822.90" y="50.70" width="5.90" height="5.90" fill="none" stroke="#d9d9d9" stroke-width="1.1"/><rect x="822.90" y="53.60" width="3.00" height="3.00" fill="#d9d9d9" /><path d="M835.1999999999999,52.4 V50.7 H836.9999999999999 M839.5999999999999,50.7 H841.4 V52.4 M841.4,55 V56.7 H839.5999999999999 M836.9999999999999,56.7 H835.1999999999999 V55" fill="none" stroke="#d9d9d9" stroke-width="1" /><rect x="837.10" y="52.50" width="2.50" height="2.40" fill="#d9d9d9" /><path d="M847.8,50.8 L853.8,56.6 M853.8,50.8 L847.8,56.6" fill="none" stroke="#d9d9d9" stroke-width="1.2" /></g><path d="M110.6,49 L114.2,51 V55 L110.6,57 L107,55 V51 Z" fill="#d9d9d9" stroke="none" stroke-width="1" /><path d="M107.6,51.4 L110.6,53.2 L113.6,51.4 M110.6,53.2 V56.6" fill="none" stroke="#2a2a2a" stroke-width="0.8" /><rect x="503.80" y="52.20" width="3.20" height="2.60" fill="#d9d9d9" /><rect x="508.60" y="50.30" width="2.60" height="1.80" fill="#d9d9d9" /><rect x="508.60" y="52.60" width="2.60" height="1.80" fill="#d9d9d9" /><rect x="508.60" y="54.80" width="2.60" height="1.80" fill="#d9d9d9" /><path d="M507,53.5 L508.6,51.2 M507,53.5 H508.6 M507,53.5 L508.6,55.7" fill="none" stroke="#d9d9d9" stroke-width="0.6" /><rect x="503.90" y="280.20" width="7.20" height="7.20" fill="none" stroke="#d9d9d9" stroke-width="0.9"/><rect x="503.90" y="280.20" width="3.60" height="3.60" fill="#d9d9d9" /><rect x="507.50" y="283.80" width="3.60" height="3.60" fill="#d9d9d9" /><path d="M503.5,61 H506 L506.5,62 H509.2 L509.7,61 H512.2 V63.5 L511.2,64 V67 L512.2,67.5 V70 H509.7 L509.2,69 H506.5 L506,70 H503.5 V67.5 L504.5,67 V64 L503.5,63.5 Z" fill="#cfcfcf" stroke="none" stroke-width="1" /><path d="M521.4,60.8 L520.2,62.4 H522.6 Z M521.4,71 L520.2,69.4 H522.6 Z M516.6,65.9 L518.2,64.7 V67.1 Z M526.2,65.9 L524.6,64.7 V67.1 Z" fill="#cfcfcf" stroke="none" stroke-width="1" /><rect x="519.20" y="63.90" width="4.40" height="4.00" fill="#9a9a9a" /><rect x="520.30" y="64.90" width="2.20" height="2.00" fill="#2e2e2e" /><path d="M531,63 H533.6 L534.6,61.7 H537.4 L538.4,63 H540 V69.2 H531 Z" fill="#d4d4d4" stroke="none" stroke-width="1" /><circle cx="535.6" cy="66" r="1.8" fill="#2e2e2e" stroke="none" stroke-width="1"/><circle cx="535.6" cy="66" r="0.9" fill="#d4d4d4" stroke="none" stroke-width="1"/><text x="547.6" y="70" font-family="Liberation Serif" font-style="italic" font-weight="bold" font-size="10" fill="#d8d8d8">i</text><path d="M551.6,67.6 L552.8,68.8 L554,67.6" fill="none" stroke="#bbb" stroke-width="0.6" /><circle cx="562.9" cy="65" r="2.5" fill="none" stroke="#d4d4d4" stroke-width="1"/><path d="M564.7,66.9 L566.8,69" fill="none" stroke="#d4d4d4" stroke-width="1.2" /><path d="M572,63 L576.5,67.5 M572,68 L576.5,63.5" fill="none" stroke="#d4d4d4" stroke-width="1.1" /><rect x="576.80" y="64.60" width="5.80" height="1.60" fill="#bdbdbd" /><rect x="585.40" y="60.20" width="12.50" height="11.40" fill="#454545" rx="1.2" /><rect x="588.40" y="64.80" width="2.60" height="2.60" fill="#d9d9d9" /><rect x="593.60" y="62.30" width="2.60" height="2.60" fill="#d9d9d9" /><rect x="593.60" y="67.30" width="2.60" height="2.60" fill="#d9d9d9" /><path d="M590,66 L594.8,63.6 M590,66 L594.8,68.6" fill="none" stroke="#d9d9d9" stroke-width="0.8" /><rect x="599.20" y="60.20" width="12.50" height="11.40" fill="#454545" rx="1.2" /><rect x="601.80" y="62.20" width="7.30" height="7.30" fill="none" stroke="#d9d9d9" stroke-width="0.9"/><rect x="602.60" y="63.00" width="5.70" height="5.60" fill="#cfcfcf" /><rect x="602.60" y="63.20" width="5.70" height="1.00" fill="#404040" /><circle cx="615.8" cy="66" r="1.3" fill="#f0c000" stroke="none" stroke-width="1"/><circle cx="621.2" cy="66" r="1.3" fill="#f0c000" stroke="none" stroke-width="1"/><path d="M616,66 H621" fill="none" stroke="#f0c000" stroke-width="0.9" /><path d="M621.6,68.2 L622.6,69.2 L623.6,68.2" fill="none" stroke="#bbb" stroke-width="0.6" /><circle cx="630" cy="62.9" r="1.2" fill="#d9d9d9" stroke="none" stroke-width="1"/><circle cx="636.6" cy="68.6" r="1.2" fill="#d9d9d9" stroke="none" stroke-width="1"/><path d="M630,62.9 H632.4 V68.6 H636.6" fill="none" stroke="#d9d9d9" stroke-width="1" /><path d="M649.3,63 A3.3,3.3 0 1 0 650,67.4" fill="none" stroke="#d4d4d4" stroke-width="0.9" /><circle cx="647" cy="65.7" r="1.1" fill="#d4d4d4" stroke="none" stroke-width="1"/><path d="M649,62 L650.5,63.8 L651.8,62.2" fill="none" stroke="#d4d4d4" stroke-width="0.6" /><path d="M649.8,68.2 L650.8,69.2 L651.8,68.2" fill="none" stroke="#bbb" stroke-width="0.6" /><path d="M657.6,69.4 L662.4,64.2" fill="none" stroke="#d4d4d4" stroke-width="1.5" /><circle cx="663" cy="63.5" r="1.8" fill="#d4d4d4" stroke="none" stroke-width="1"/><circle cx="663.8" cy="62.6" r="0.8" fill="#2e2e2e" stroke="none" stroke-width="1"/><path d="M663.6,68.2 L664.6,69.2 L665.6,68.2" fill="none" stroke="#bbb" stroke-width="0.6" /><rect x="671.30" y="62.30" width="8.40" height="7.00" fill="none" stroke="#d9d9d9" stroke-width="1"/><circle cx="675.5" cy="66.1" r="1.7" fill="#d4d4d4" stroke="none" stroke-width="1"/><rect x="689.20" y="61.00" width="1.80" height="4.20" fill="#d4d4d4" /><path d="M686.6,65.2 H693.4 L694,70 H686 Z" fill="#d4d4d4" stroke="none" stroke-width="1" /><path d="M688,68 V70 M689.8,68 V70 M691.6,68 V70" fill="none" stroke="#2e2e2e" stroke-width="0.5" /><path d="M693.2,68.2 L694.2,69.2 L695.2,68.2" fill="none" stroke="#bbb" stroke-width="0.6" /><rect x="697.30" y="59.80" width="12.60" height="11.80" fill="#4a4a4a" rx="1.2" /><path d="M700.7,61.8 V69.8 M706.1,61.8 V69.8 M698.8,63.7 H708.3 M698.8,67.9 H708.3" fill="none" stroke="#bdbdbd" stroke-width="0.9" /><rect x="710.80" y="59.80" width="13.00" height="11.80" fill="#4a4a4a" rx="1.2" /><rect x="712.80" y="61.90" width="9.00" height="7.70" fill="none" stroke="#cfcfcf" stroke-width="0.9"/><path d="M714.6,64 V67.6 M716.4,65 H720.6 M716.4,66.6 H720.6" fill="none" stroke="#cfcfcf" stroke-width="0.8" /><rect x="503.00" y="73.60" width="4.40" height="13.40" fill="#262626" /><rect x="508.80" y="73.90" width="11.70" height="11.90" fill="#7a4870" /><rect x="521.00" y="73.90" width="11.70" height="11.90" fill="#c9c9cc" /><rect x="533.80" y="73.90" width="11.70" height="11.90" fill="#8f8a6c" /><rect x="546.90" y="73.90" width="11.70" height="11.90" fill="#3c3428" /><rect x="558.50" y="73.90" width="11.70" height="11.90" fill="#5a8a22" /><rect x="571.00" y="73.90" width="11.70" height="11.90" fill="#6a5a3c" /><rect x="583.50" y="73.90" width="11.70" height="11.90" fill="#2a6a7a" /><rect x="596.00" y="73.90" width="11.70" height="11.90" fill="#a8d870" /><rect x="608.50" y="73.90" width="11.70" height="11.90" fill="#7a6aaa" /><rect x="621.40" y="73.90" width="11.70" height="11.90" fill="#151515" /><rect x="633.00" y="73.90" width="11.70" height="11.90" fill="#1e2e18" /><rect x="645.80" y="73.90" width="11.70" height="11.90" fill="#3e7a2a" /><rect x="658.00" y="73.90" width="11.70" height="11.90" fill="#8a8a8a" /><rect x="671.00" y="73.90" width="11.70" height="11.90" fill="#5a8a50" /><rect x="683.00" y="73.90" width="11.70" height="11.90" fill="#78b078" /><rect x="695.30" y="73.90" width="11.70" height="11.90" fill="#8a8aff" /><rect x="708.40" y="73.90" width="11.70" height="11.90" fill="#080808" /><rect x="720.30" y="73.90" width="11.70" height="11.90" fill="#8a6a80" /><rect x="510.60" y="75.80" width="8.00" height="7.80" fill="none" stroke="#e8e8e8" stroke-width="0.8"/><path d="M511.6,81.4 L513,79 L514.2,80.4 L515.6,78 L517.6,81.4 Z" fill="#e8e8e8" stroke="none" stroke-width="1" /><rect x="511.60" y="82.20" width="6.00" height="0.70" fill="#e8e8e8" /><rect x="522.80" y="75.60" width="7.20" height="7.20" fill="none" stroke="#efefef" stroke-width="0.8"/><rect x="525.20" y="78.00" width="6.60" height="6.40" fill="#f6f6f6" /><rect x="526.60" y="79.20" width="2.20" height="2.20" fill="#d0d0d0" /><path d="M539.7,75.8 Q542.6,79.6 542.6,81.4 A2.9,2.9 0 0 1 536.8,81.4 Q536.8,79.6 539.7,75.8 Z" fill="#f0f0f0" stroke="none" stroke-width="1" /><path d="M548.6,77 H550.4 L554.6,83 H556.4 M548.6,83 H550.4 L554.6,77 H556.4" fill="none" stroke="#e8e8e8" stroke-width="0.9" /><path d="M560.4,75.4 V84.2 H569.2" fill="none" stroke="#d8e8c8" stroke-width="0.8" /><path d="M560.8,83.6 L564.6,79.6 L566,80.4 L568.8,76.2" fill="none" stroke="#e8f0d8" stroke-width="0.8" /><path d="M575.4,78.6 Q578,81.4 578,82.6 A2.6,2.6 0 0 1 572.8,82.6 Q572.8,81.4 575.4,78.6 Z" fill="#e8e8e8" stroke="none" stroke-width="1" /><path d="M577.4,79.6 L581.4,75.6 M578.8,75.4 H581.6 V78.2" fill="none" stroke="#e8e8e8" stroke-width="0.9" /><rect x="585.00" y="75.40" width="8.80" height="8.80" fill="none" stroke="#dfe8e8" stroke-width="0.8"/><path d="M586.2,77 L588,79 L587,81.4 L589.6,83 M590,76 L591.6,78.6 L590.6,80.6 L592.6,82.4" fill="none" stroke="#e8eeee" stroke-width="0.9" /><path d="M598,83.6 L606.2,75.6" fill="none" stroke="#f4f8ee" stroke-width="0.9" /><circle cx="598.2" cy="83.4" r="0.9" fill="#f4f8ee" stroke="none" stroke-width="1"/><circle cx="606" cy="75.8" r="0.9" fill="#f4f8ee" stroke="none" stroke-width="1"/><circle cx="614.4" cy="80.4" r="3.6" fill="none" stroke="#9a8ac4" stroke-width="0.8"/><rect x="622.60" y="75.60" width="9.00" height="8.60" fill="#dcdcdc" /><rect x="622.60" y="77.60" width="9.00" height="0.60" fill="#888" /><rect x="622.60" y="80.20" width="9.00" height="0.60" fill="#888" /><defs><linearGradient id="pg" x1="0" x2="1"><stop offset="0" stop-color="#f0f0f0"/><stop offset="1" stop-color="#222"/></linearGradient></defs><rect x="634.20" y="79.00" width="7.40" height="5.40" fill="url(#pg)" /><path d="M641.6,75 V78.6 M639.8,76.8 H643.4" fill="none" stroke="#f0f0f0" stroke-width="1" /><rect x="646.80" y="79.60" width="7.40" height="5.00" fill="url(#pg)" /><circle cx="648.2" cy="77.8" r="1.1" fill="#e0e0e0" stroke="none" stroke-width="1"/><circle cx="655" cy="77.2" r="1.2" fill="#c8c8c8" stroke="none" stroke-width="1"/><circle cx="661.4" cy="79.8" r="1.9" fill="#f4a020" stroke="none" stroke-width="1"/><path d="M663,79.8 H666" fill="none" stroke="#bbb" stroke-width="0.8" /><circle cx="667" cy="79.8" r="1.6" fill="#c4c4c4" stroke="none" stroke-width="1"/><circle cx="676.8" cy="79.9" r="3.2" fill="#e8e8e8" stroke="none" stroke-width="1"/><path d="M673.8,81 L679.6,77.6 A3.2,3.2 0 0 0 673.8,81 Z" fill="#5a8a50" stroke="none" stroke-width="1" /><path d="M684.6,83 Q688.6,82 688.6,77 H690 Q690,82 694,83 Z" fill="#f4f4f4" stroke="none" stroke-width="1" /><rect x="684.60" y="83.60" width="9.40" height="0.80" fill="#f4f4f4" /><defs><linearGradient id="rg" x1="0" y1="0" x2="1" y2="1"><stop offset="0" stop-color="#ff40a0"/><stop offset="0.35" stop-color="#4060ff"/><stop offset="0.7" stop-color="#40e080"/><stop offset="1" stop-color="#ffe040"/></linearGradient></defs><circle cx="701.4" cy="79.9" r="3.3" fill="none" stroke="url(#rg)" stroke-width="1.6"/><rect x="709.60" y="75.20" width="1.00" height="1.00" fill="#9a9a9a" /><rect x="709.60" y="78.00" width="1.00" height="1.00" fill="#9a9a9a" /><rect x="709.60" y="80.80" width="1.00" height="1.00" fill="#9a9a9a" /><rect x="711.00" y="76.60" width="1.00" height="1.00" fill="#9a9a9a" /><rect x="711.00" y="79.40" width="1.00" height="1.00" fill="#9a9a9a" /><rect x="712.40" y="75.20" width="1.00" height="1.00" fill="#9a9a9a" /><rect x="712.40" y="78.00" width="1.00" height="1.00" fill="#9a9a9a" /><rect x="712.40" y="80.80" width="1.00" height="1.00" fill="#9a9a9a" /><rect x="713.80" y="76.60" width="1.00" height="1.00" fill="#9a9a9a" /><rect x="713.80" y="79.40" width="1.00" height="1.00" fill="#9a9a9a" /><rect x="715.20" y="75.20" width="1.00" height="1.00" fill="#9a9a9a" /><rect x="715.20" y="78.00" width="1.00" height="1.00" fill="#9a9a9a" /><text x="713.6" y="84.6" font-family="Liberation Sans" font-weight="bold" font-size="4.6" fill="#e8e8e8">01</text><path d="M722,78.6 Q726.2,76.8 730.4,78.6" fill="none" stroke="#f0f0f0" stroke-width="1.1" /><path d="M723.2,78.4 L723.8,82.8 M729.2,78.4 L728.6,82.8 M725,78 V79.8 M727.4,78 V79.8" fill="none" stroke="#f0f0f0" stroke-width="0.9" /><path d="M722,79.8 H730.4" fill="none" stroke="#f0f0f0" stroke-width="0.5" /><path d="M735.2,76.8 L736.6,78.2 L735.2,79.60000000000001 M737.2,76.8 L738.6,78.2 L737.2,79.60000000000001" fill="none" stroke="#e0e0e0" stroke-width="0.8" /><path d="M782,76.0 L783.4,77.4 L782,78.80000000000001 M784,76.0 L785.4,77.4 L784,78.80000000000001" fill="none" stroke="#e0e0e0" stroke-width="0.8" /><path d="M822.6,76.0 L824.0,77.4 L822.6,78.80000000000001 M824.6,76.0 L826.0,77.4 L824.6,78.80000000000001" fill="none" stroke="#e0e0e0" stroke-width="0.8" /><path d="M851.2,76.0 L852.6,77.4 L851.2,78.80000000000001 M853.2,76.0 L854.6,77.4 L853.2,78.80000000000001" fill="none" stroke="#e0e0e0" stroke-width="0.8" /><rect x="743.80" y="73.60" width="1.30" height="13.40" fill="#262626" /><rect x="790.80" y="73.60" width="1.30" height="13.40" fill="#262626" /><rect x="831.20" y="73.60" width="1.30" height="13.40" fill="#262626" /><rect x="795.80" y="76.20" width="6.60" height="6.40" fill="#cfcfcf" rx="1" /><path d="M797.2,79.6 L798.6,81 L801,77.8" fill="none" stroke="#333" stroke-width="0.8" /><rect x="838.20" y="76.40" width="7.40" height="7.40" fill="none" stroke="#cfcfcf" stroke-width="0.9"/><path d="M839.6,78.4 V82.4 M841.4,78.4 H844.4" fill="none" stroke="#cfcfcf" stroke-width="0.7" /><path d="M842.4,80.4 L846.6,82.6 L844.6,83.2 L844,85 Z" fill="#e8e8e8" stroke="#2e2e2e" stroke-width="0.3" /><rect x="104.50" y="91.00" width="13.00" height="11.40" fill="#3e3e3e" rx="1" /><rect x="104.50" y="128.00" width="13.00" height="12.00" fill="#3e3e3e" rx="1" /><rect x="106.80" y="82.40" width="6.00" height="4.20" fill="#d4d4d4" /><path d="M112.6,84.4 L115.4,82.6 V86.4 Z" fill="#d4d4d4" stroke="none" stroke-width="1" /><circle cx="110.8" cy="95.2" r="2.4" fill="#d4d4d4" stroke="none" stroke-width="1"/><rect x="109.80" y="97.40" width="2.00" height="2.60" fill="#d4d4d4" /><rect x="109.90" y="100.40" width="1.80" height="0.70" fill="#d4d4d4" /><path d="M108.4,106.2 L114,110 L111.2,110.6 L109.6,113.6 Z" fill="#d4d4d4" stroke="none" stroke-width="1" /><rect x="106.60" y="121.00" width="8.80" height="4.00" fill="#d4d4d4" /><path d="M108,118.4 L108.6,120.6 M110.8,117.8 V120.6 M113.6,118.4 L113,120.6" fill="none" stroke="#d4d4d4" stroke-width="0.7" /><rect x="107.20" y="122.40" width="7.60" height="0.50" fill="#2b2b2b" /><rect x="107.80" y="130.80" width="6.00" height="6.00" fill="#d4d4d4" /><path d="M108.6,136.2 L113.4,131.4" fill="none" stroke="#3a3a3a" stroke-width="0.7" /><circle cx="109.8" cy="146" r="2.4" fill="none" stroke="#4a4a4a" stroke-width="0.8"/><circle cx="111.8" cy="147" r="2.4" fill="none" stroke="#4a4a4a" stroke-width="0.8"/><path d="M107.6,160.6 H114 L112.6,159.2 V157.8 A1.8,1.8 0 0 0 109,157.8 V159.2 Z" fill="#d4d4d4" stroke="none" stroke-width="1" /><rect x="107.00" y="161.20" width="7.60" height="0.90" fill="#d4d4d4" /><rect x="106.80" y="167.60" width="8.00" height="6.00" fill="#d4d4d4" /><rect x="109.00" y="174.40" width="3.60" height="0.80" fill="#d4d4d4" /><circle cx="110.8" cy="170.6" r="1.3" fill="#2b2b2b" stroke="none" stroke-width="1"/><rect x="104.50" y="177.00" width="13.70" height="1.60" fill="#242424" /><rect x="108.00" y="424.00" width="2.20" height="1.80" fill="#d4d4d4" /><rect x="110.40" y="426.40" width="2.60" height="1.60" fill="#d4d4d4" /><rect x="110.40" y="428.80" width="2.60" height="1.60" fill="#d4d4d4" /><path d="M109,425.6 V429.6 H110.4 M109,427.2 H110.4" fill="none" stroke="#d4d4d4" stroke-width="0.5" /><rect x="104.00" y="433.60" width="7.60" height="13.20" fill="#262626" /><path d="M117.5,436.8 L121.10000000000001,438.40000000000003 L117.5,440.0 L113.9,438.40000000000003 Z" fill="#f06060" stroke="none" stroke-width="1" /><path d="M113.9,440.40000000000003 L117.5,442.0 L121.10000000000001,440.40000000000003" fill="none" stroke="#30d030" stroke-width="1.1" /><path d="M113.9,442.40000000000003 L117.5,444.0 L121.10000000000001,442.40000000000003" fill="none" stroke="#3a8ae0" stroke-width="1.1" /><path d="M121.9,442.2 L122.7,443.0 L123.5,442.2" fill="none" stroke="#aaa" stroke-width="0.5" /><rect x="125.40" y="436.30" width="71.80" height="8.40" fill="#232323" stroke="#3c3c3c" stroke-width="0.6"/><path d="M191.4,439.4 L193.7,441.8 L196,439.4" fill="none" stroke="#cfcfcf" stroke-width="0.8" /><rect x="503.80" y="291.20" width="6.00" height="6.60" fill="none" stroke="#d9d9d9" stroke-width="0.9"/><rect x="506.00" y="293.60" width="6.00" height="6.40" fill="#d9d9d9" /><path d="M517.8,291 H525 L527.2,293.2 V300 H517.8 Z" fill="#d9d9d9" stroke="none" stroke-width="1" /><rect x="519.60" y="291.60" width="4.60" height="2.60" fill="#2e2e2e" /><rect x="519.20" y="296.40" width="6.60" height="3.00" fill="#9a9a9a" /><rect x="532.80" y="291.40" width="5.20" height="7.20" fill="#bdbdbd" /><rect x="534.80" y="292.60" width="5.40" height="7.20" fill="#d9d9d9" /><rect x="547.00" y="291.20" width="9.20" height="8.60" fill="none" stroke="#d9d9d9" stroke-width="0.9"/><circle cx="551" cy="295.6" r="2" fill="#d9d9d9" stroke="none" stroke-width="1"/><path d="M553.6,297.6 L554.6,298.6 L555.6,297.6" fill="none" stroke="#bbb" stroke-width="0.6" /><text x="562" y="299.4" font-family="Liberation Sans" font-size="6.8" fill="#5a5a5a">UV</text><path d="M574.2,295.6 L575.4,296.8 L576.6,295.6" fill="none" stroke="#5a5a5a" stroke-width="0.6" /><text x="583.4" y="300.2" font-family="Liberation Serif" font-style="italic" font-weight="bold" font-size="10" fill="#d8d8d8">i</text><path d="M595,291.4 V300 H603.2" fill="none" stroke="#d9d9d9" stroke-width="0.8" /><rect x="596.40" y="292.60" width="1.30" height="7.00" fill="#d9d9d9" /><rect x="598.40" y="294.80" width="1.30" height="4.80" fill="#d9d9d9" /><rect x="600.40" y="296.20" width="1.30" height="3.40" fill="#d9d9d9" /><rect x="501.00" y="433.60" width="4.60" height="13.20" fill="#262626" /><path d="M514.4,436.8 L518.0,438.40000000000003 L514.4,440.0 L510.8,438.40000000000003 Z" fill="#f06060" stroke="none" stroke-width="1" /><path d="M510.8,440.40000000000003 L514.4,442.0 L518.0,440.40000000000003" fill="none" stroke="#30d030" stroke-width="1.1" /><path d="M510.8,442.40000000000003 L514.4,444.0 L518.0,442.40000000000003" fill="none" stroke="#3a8ae0" stroke-width="1.1" /><path d="M518.8,442.2 L519.6,443.0 L520.4,442.2" fill="none" stroke="#aaa" stroke-width="0.5" /><rect x="523.10" y="436.70" width="7.50" height="7.30" fill="#000" /><rect x="534.30" y="436.70" width="7.70" height="7.30" fill="#5a5a5a" /><rect x="545.20" y="434.60" width="13.50" height="11.40" fill="#3e3e3e" rx="1.2" /><rect x="547.60" y="437.00" width="8.80" height="6.20" fill="none" stroke="#d8d8d8" stroke-width="0.9"/><rect x="549.60" y="443.60" width="4.80" height="0.80" fill="#d8d8d8" /><circle cx="550.6" cy="440.6" r="1.4" fill="#3a70e0" stroke="none" stroke-width="1"/><circle cx="552.8" cy="440.6" r="1.4" fill="#30c040" stroke="none" stroke-width="1"/><circle cx="551.7" cy="439" r="1.4" fill="#e04040" stroke="none" stroke-width="1"/><rect x="734.40" y="436.60" width="2.10" height="2.10" fill="#d9d9d9" /><rect x="734.40" y="439.20" width="2.10" height="2.10" fill="#d9d9d9" /><rect x="734.40" y="441.80" width="2.10" height="2.10" fill="#d9d9d9" /><rect x="737.00" y="436.60" width="2.10" height="2.10" fill="#d9d9d9" /><rect x="737.00" y="439.20" width="2.10" height="2.10" fill="#d9d9d9" /><rect x="737.00" y="441.80" width="2.10" height="2.10" fill="#d9d9d9" /><rect x="739.60" y="436.60" width="2.10" height="2.10" fill="#d9d9d9" /><rect x="739.60" y="439.20" width="2.10" height="2.10" fill="#d9d9d9" /><rect x="739.60" y="441.80" width="2.10" height="2.10" fill="#d9d9d9" /><rect x="748.60" y="436.60" width="2.00" height="2.00" fill="#d9d9d9" /><path d="M749.6,438.6 V443 M749.6,440.2 H752 M749.6,443 H752" fill="none" stroke="#d9d9d9" stroke-width="0.7" /><rect x="752.00" y="439.20" width="2.00" height="2.00" fill="#d9d9d9" /><rect x="752.00" y="442.00" width="2.00" height="2.00" fill="#d9d9d9" /><path d="M761,436.8 H767 V443.4 H761 Z" fill="#d9d9d9" stroke="none" stroke-width="1" /><rect x="762.20" y="438.00" width="3.60" height="4.20" fill="#aaa" /><path d="M773.8,436.4 V444.2 M769.8,440.3 H777.8" fill="none" stroke="#d9d9d9" stroke-width="0.7" /><circle cx="773.8" cy="440.3" r="1.6" fill="none" stroke="#d9d9d9" stroke-width="0.7"/><circle cx="787.4" cy="440.4" r="1.4" fill="none" stroke="#d9d9d9" stroke-width="0.7"/><circle cx="837" cy="440.4" r="1.4" fill="none" stroke="#d9d9d9" stroke-width="0.7"/><rect x="792.80" y="436.60" width="39.20" height="7.90" fill="#1d1d1d" rx="1" stroke="#4a4a4a" stroke-width="0.6"/><rect x="846.00" y="434.70" width="9.80" height="11.30" fill="#454545" /><rect x="848.60" y="439.60" width="4.60" height="3.60" fill="#d9d9d9" /><path d="M849.6,439.6 V438.4 A1.3,1.3 0 0 1 852.2,438.4 V439.6" fill="none" stroke="#d9d9d9" stroke-width="0.7" /></svg>
  <!-- status bar -->
  <div class="t b" id="psz" style="left:748.9px;top:77.2px;font-size:5.4px;color:#d8d8d8">Parent Size:</div>
  <div class="t b" id="stk" style="left:805px;top:77.2px;font-size:5.47px;color:#d8d8d8">Stack</div>
  <div class="t" id="srgb" style="left:127.7px;top:437px;font-size:6.6px;color:#e0e0e0">sRGB (default)</div>
  <div class="t b" id="zm" style="left:808.7px;top:437.6px;font-size:5.9px;color:#e8e8e8">22.98%</div>
  <div class="a" style="left:0;top:447px;width:960px;height:1px;background:#222"></div>
  <div class="a" style="left:0;top:448px;width:960px;height:12px;background:#303030"></div>
  <div class="a" style="left:594px;top:450px;width:64px;height:8px;background:#474747"></div>
  <div class="t b" id="st1" style="left:661px;top:451.6px;font-size:5.5px;color:#d0d0d0">Substance Engine: Metal (Apple Silicon)</div>
  <div class="t b" id="st2" style="left:769.8px;top:451.6px;font-size:5.6px;color:#d0d0d0">Memory: 0%</div>
  <div class="t b" id="st3" style="left:814px;top:451.6px;font-size:5.4px;color:#d0d0d0">Version: 15.1.0</div>
</div></div>
</body></html>
